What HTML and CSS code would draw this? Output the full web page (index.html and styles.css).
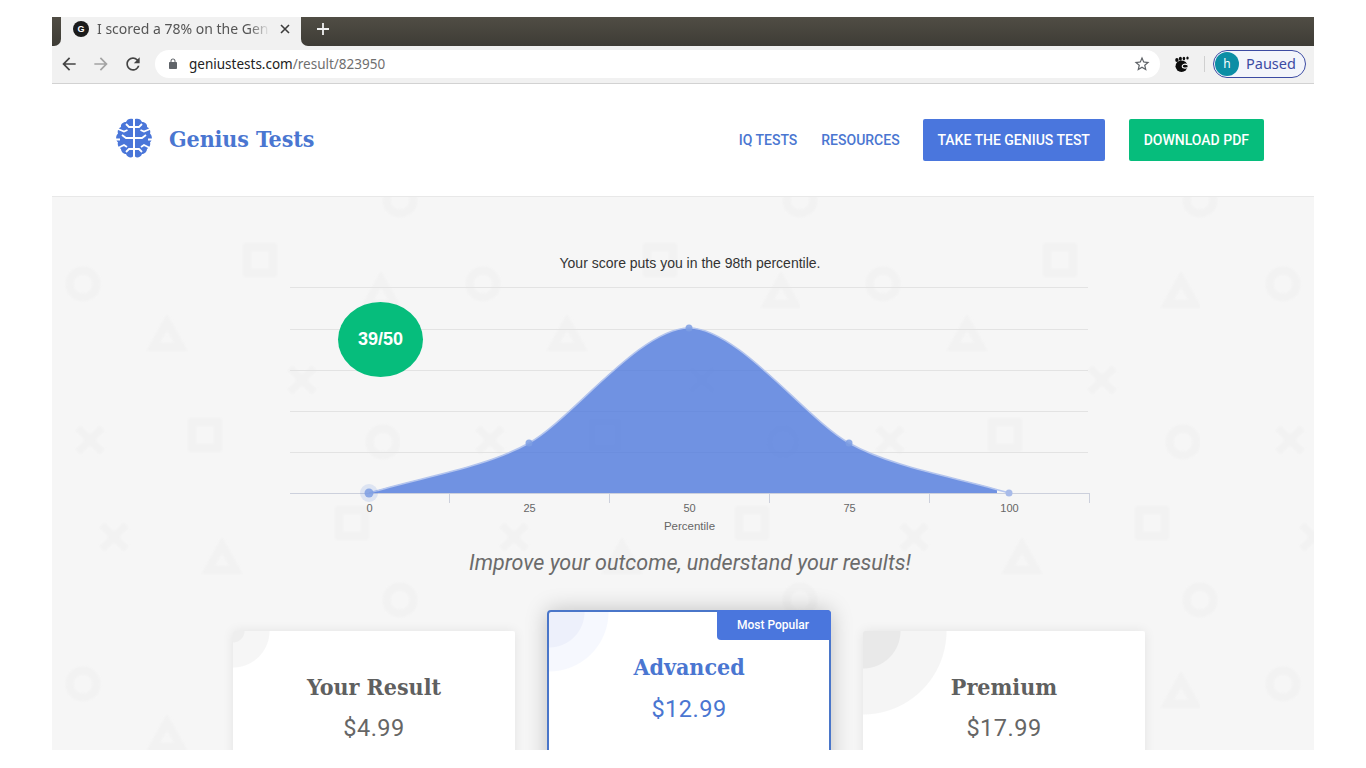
FILE: index.html
```html
<!DOCTYPE html>
<html lang="en">
<head>
    <meta charset="UTF-8">
    <meta name="viewport" content="width=device-width, initial-scale=1.0">
    <title>Genius Tests</title>
    <link rel="stylesheet" href="styles.css">
</head>
<body>
<div class="window">

    <!-- Browser tabs -->
    <div class="tabstrip">
        <div class="tab-stub"></div>
        <div class="tab">
            <span class="favicon">G</span>
            <span class="tab-title">I scored a 78% on the Gen</span>
            <svg class="tab-close" width="10" height="10" viewBox="0 0 10 10"><path d="M1 1l8 8M9 1l-8 8" stroke="#3c3c3c" stroke-width="1.600" fill="none"/></svg>
        </div>
        <div class="tab-rest">
            <svg class="new-tab" width="14" height="14" viewBox="0 0 14 14"><path d="M7 1v12M1 7h12" stroke="#f1f1f1" stroke-width="1.800" fill="none"/></svg>
        </div>
    </div>

    <!-- Browser toolbar -->
    <div class="toolbar">
        <svg class="tool-icon" width="20" height="20" viewBox="0 0 24 24"><path fill="#444" d="M20 11H7.830l5.590-5.590L12 4l-8 8 8 8 1.410-1.410L7.830 13H20v-2z"/></svg>
        <svg class="tool-icon" width="20" height="20" viewBox="0 0 24 24"><path fill="#a3a3a3" d="M4 11h12.170l-5.590-5.590L12 4l8 8-8 8-1.410-1.410L16.170 13H4v-2z"/></svg>
        <svg class="tool-icon" width="20" height="20" viewBox="0 0 24 24"><path fill="#444" d="M17.650 6.350A7.958 7.958 0 0 0 12 4c-4.420 0-7.990 3.580-7.990 8s3.570 8 7.990 8c3.730 0 6.840-2.550 7.730-6h-2.080A5.990 5.990 0 0 1 12 18c-3.310 0-6-2.690-6-6s2.690-6 6-6c1.660 0 3.140.690 4.220 1.780L13 11h7V4l-2.350 2.350z"/></svg>
        <div class="omnibox">
            <svg width="12" height="12" viewBox="0 0 24 24"><path fill="#5f6368" d="M18 8h-1V6c0-2.760-2.240-5-5-5S7 3.240 7 6v2H6c-1.100 0-2 .9-2 2v10c0 1.100.9 2 2 2h12c1.100 0 2-.9 2-2V10c0-1.100-.9-2-2-2zM9 6c0-1.660 1.340-3 3-3s3 1.340 3 3v2H9V6z"/></svg>
            <span class="url"><span class="url-host">geniustests.com</span>/result/823950</span>
            <svg class="star" width="18" height="18" viewBox="0 0 24 24"><path fill="#5f6368" d="M22 9.240l-7.190-.62L12 2 9.190 8.630 2 9.240l5.460 4.730L5.820 21 12 17.270 18.180 21l-1.630-7.030L22 9.240zM12 15.400l-3.760 2.270 1-4.280-3.320-2.880 4.380-.38L12 6.100l1.710 4.040 4.380.38-3.320 2.880 1 4.280L12 15.400z"/></svg>
        </div>
        <svg class="gnome" width="15" height="16" viewBox="0 0 15 16">
            <ellipse cx="6.500" cy="10.200" rx="6" ry="5.800" fill="#0c0c0c"/>
            <path d="M12.500 8.800C9.500 7.400 7 8.600 7.200 10.400 7.400 12.200 10 12.600 12.500 11.600" fill="none" stroke="#fff" stroke-width="1.100"/>
            <ellipse cx="1.900" cy="4" rx="1.700" ry="2.100" fill="#0c0c0c"/>
            <ellipse cx="5.400" cy="2.700" rx="1.500" ry="2" fill="#0c0c0c"/>
            <ellipse cx="8.900" cy="2.600" rx="1.300" ry="1.800" fill="#0c0c0c"/>
            <ellipse cx="12.500" cy="2" rx="1.200" ry="1.600" fill="#0c0c0c"/>
        </svg>
        <span class="tool-sep"></span>
        <div class="profile">
            <span class="avatar">h</span>
            <span class="profile-label">Paused</span>
        </div>
    </div>

    <!-- Site header -->
    <header class="site-header">
        <a class="brand" href="#">
            <svg class="brain" width="36" height="40" viewBox="0 0 36 40">
                <g id="lobe">
                    <path fill="#4a76d9" d="M17 1C14 0 11 1 10 4 7 4 4.500 6 5 9 2.500 10 1 13 2 15.500-.5 18-.5 22 2 24.500 1 27.500 3 30 5 31 5 34 8 36 10 36 11 39 15 40.500 17 38.500Z"/>
                    <path fill="none" stroke="#fff" stroke-width="1.800" d="M17 9H13L10 6M2 11L8 13.500 11.500 12M17 20H10L6 17M-1 21.500H4M2 30L8 27 11 29M17 31H13L10 34"/>
                </g>
                <use href="#lobe" transform="matrix(-1 0 0 1 36 0)"/>
            </svg>
            <span class="brand-name">Genius Tests</span>
        </a>
        <nav class="site-nav">
            <a class="nav-link" href="#">IQ TESTS</a>
            <a class="nav-link nav-link-last" href="#">RESOURCES</a>
            <a class="nav-btn nav-btn-blue" href="#">TAKE THE GENIUS TEST</a>
            <a class="nav-btn nav-btn-green" href="#">DOWNLOAD PDF</a>
        </nav>
    </header>

    <!-- Result -->
    <main class="result">
        <p class="chart-title">Your score puts you in the 98th percentile.</p>

        <div class="chart">
            <div class="score-badge">39/50</div>
            <svg width="800" height="252" viewBox="290 279 800 252">
                <defs>
                    <clipPath id="fill-clip"><rect x="360" y="279" width="637" height="215"/></clipPath>
                </defs>
                <g stroke="#e3e3e3" stroke-width="1">
                    <path d="M290 287.500H1088M290 329.500H1088M290 370.500H1088M290 411.500H1088M290 452.500H1088"/>
                </g>
                <path d="M289.500 493.500H1089.500M289.500 493V503M449.500 493V503M609.500 493V503M769.500 493V503M929.500 493V503M1089.500 493V503" stroke="#ccd0dc" stroke-width="1" fill="none"/>
                <path class="curve-fill" clip-path="url(#fill-clip)" d="M369 493C417 478 485 468 529 443 572 419 640 328 689 328 738 328 806 419 849 443 893 468 961 478 1009 493Z"/>
                <path class="curve-line" d="M369 493C417 478 485 468 529 443 572 419 640 328 689 328 738 328 806 419 849 443 893 468 961 478 1009 493"/>
                <circle cx="369" cy="493" r="9" fill="#4a76dd" fill-opacity=".14"/>
                <circle class="dot" cx="369" cy="493" r="4.500"/>
                <circle class="dot" cx="529" cy="443" r="3.500"/>
                <circle class="dot" cx="689" cy="328" r="3.500"/>
                <circle class="dot" cx="849" cy="443" r="3.500"/>
                <circle class="dot dot-light" cx="1009" cy="493" r="3.500"/>
                <g class="axis-labels" text-anchor="middle">
                    <text x="369.500" y="512">0</text>
                    <text x="529.500" y="512">25</text>
                    <text x="689.500" y="512">50</text>
                    <text x="849.500" y="512">75</text>
                    <text x="1009.500" y="512">100</text>
                    <text class="axis-title" x="689.500" y="530">Percentile</text>
                </g>
            </svg>
        </div>

        <p class="tagline">Improve your outcome, understand your results!</p>

        <div class="plans">
            <div class="plan plan-basic">
                <h3>Your Result</h3>
                <p class="price">$4.99</p>
            </div>
            <div class="plan plan-popular">
                <span class="popular-tag">Most Popular</span>
                <h3>Advanced</h3>
                <p class="price">$12.99</p>
            </div>
            <div class="plan plan-premium">
                <h3>Premium</h3>
                <p class="price">$17.99</p>
            </div>
        </div>
    </main>
</div>
</body>
</html>
```

FILE: styles.css
```css
body {
    margin: 0;
    padding: 17px 52px 18px;
    background-color: #fff;
    height: 768px;
    box-sizing: border-box;
    overflow: hidden;
    font-family: Roboto, sans-serif;
}

.window {
    height: 733px;
    display: flex;
    flex-direction: column;
    overflow: hidden;
}

/* browser tabs */
.tabstrip {
    height: 29px;
    flex: none;
    display: flex;
    background-color: #f1f1f1;
}

.tab-stub,
.tab-rest {
    background: linear-gradient(#504d44, #3e3c36);
}

.tab-stub {
    width: 9px;
    border-bottom-right-radius: 7px;
}

.tab {
    width: 240px;
    display: flex;
    align-items: center;
    padding: 0 0 5px 12px;
    box-sizing: border-box;
    color: #555;
    font-family: "Noto Sans", sans-serif;
    font-size: 14px;
}

.favicon {
    width: 16px;
    height: 16px;
    flex: none;
    border-radius: 50%;
    background-color: #1b1b1b;
    color: #fff;
    font-family: "Liberation Sans", sans-serif;
    font-size: 9px;
    font-weight: bold;
    line-height: 16px;
    text-align: center;
}

.tab-title {
    width: 173px;
    margin: 0 0 2px 8px;
    white-space: nowrap;
    overflow: hidden;
    -webkit-mask-image: linear-gradient(to right, #000 88%, transparent);
    mask-image: linear-gradient(to right, #000 88%, transparent);
}

.tab-close {
    margin-left: 10px;
}

.tab-rest {
    flex: 1;
    display: flex;
    align-items: center;
    padding-bottom: 5px;
    border-bottom-left-radius: 7px;
}

.new-tab {
    margin-left: 15px;
}

/* browser toolbar */
.toolbar {
    height: 36px;
    flex: none;
    display: flex;
    align-items: center;
    padding: 0 0 1px 7px;
    background-color: #f1f1f1;
    border-bottom: 1px solid #d2d2d2;
}

.tool-icon {
    margin-right: 12px;
}

.omnibox {
    width: 1005px;
    height: 28px;
    display: flex;
    align-items: center;
    padding: 0 9px 0 12px;
    box-sizing: border-box;
    background-color: #fff;
    border-radius: 14px;
    font-family: "Noto Sans", sans-serif;
    font-size: 13.5px;
}

.url {
    margin-left: 10px;
    color: #6f6f6f;
    flex: 1;
}

.url-host {
    color: #222;
}

.gnome {
    margin-left: 15px;
}

.tool-sep {
    width: 1px;
    height: 16px;
    margin: 0 8px 0 14px;
    background-color: #d0d0d0;
}

.profile {
    width: 93px;
    height: 28px;
    display: flex;
    align-items: center;
    gap: 7px;
    box-sizing: border-box;
    border: 1px solid #3c4ba3;
    border-radius: 14px;
    padding-left: 1px;
    color: #3c4ba3;
    background-color: #f3f5fb;
    font-family: "Noto Sans", sans-serif;
    font-size: 14.5px;
}

.profile-label {
    margin-bottom: 2px;
}

.avatar {
    width: 24px;
    height: 24px;
    border-radius: 50%;
    background-color: #0b8ea5;
    color: #fff;
    font-size: 12px;
    line-height: 23px;
    text-align: center;
}

/* site header */
.site-header {
    height: 112px;
    flex: none;
    display: flex;
    align-items: center;
    justify-content: space-between;
    padding: 0 50px 0 64px;
    background-color: #fff;
    border-bottom: 1px solid #e8e8e8;
}

.brand {
    display: flex;
    align-items: center;
    gap: 17px;
    margin-bottom: 2px;
    text-decoration: none;
}

.brain {
    margin-bottom: 2px;
}

.brand-name {
    margin-bottom: 2px;
    color: #4a76d1;
    font-family: "DejaVu Serif Condensed", "DejaVu Serif", serif;
    font-size: 23px;
    font-weight: bold;
    letter-spacing: -.1px;
}

.site-nav {
    display: flex;
    align-items: center;
    gap: 24px;
}

.nav-link {
    color: #4a76d1;
    font-size: 14px;
    font-weight: 500;
    text-decoration: none;
}

.nav-link-last {
    margin-right: -1px;
}

.nav-btn {
    height: 42px;
    padding: 0 15px;
    display: flex;
    align-items: center;
    justify-content: center;
    box-sizing: border-box;
    border-radius: 2px;
    color: #fff;
    font-size: 14px;
    font-weight: 500;
    text-decoration: none;
}

.nav-btn-blue {
    width: 182px;
    padding: 0;
    background-color: #4a76dd;
}

.nav-btn-green {
    background-color: #06bd7c;
}

/* result panel */
.result {
    flex: 1;
    min-height: 0;
    overflow: hidden;
    padding: 57px 0 0 14px;
    background-color: #f6f6f6;
    background-position: -52px -197px;
    background-size: 400px 400px;
    background-image: url("data:image/svg+xml,%3Csvg xmlns='http://www.w3.org/2000/svg' width='400' height='400' fill='none' stroke='%23f2f2f2' stroke-width='8'%3E%3Cfilter id='b'%3E%3CfeGaussianBlur stdDeviation='.9'/%3E%3C/filter%3E%3Cg filter='url(%23b)'%3E%3Ccircle cx='83' cy='284' r='13.500'/%3E%3Ccircle cx='0' cy='200' r='13.500'/%3E%3Ccircle cx='400' cy='200' r='13.500'/%3E%3Ccircle cx='383' cy='42' r='13.500'/%3E%3Cpath d='M167 322l14 25h-28zM381 279l14 25h-28zM222 145l14 25h-28z'/%3E%3Cpath d='M247 247h26v26h-26zM192 22h26v26h-26zM339 110h26v26h-26z'/%3E%3Cpath d='M290 368l24 24M314 368l-24 24M78 28l24 24M102 28l-24 24M102 125l24 24M126 125l-24 24'/%3E%3C/g%3E%3C/svg%3E");
}

.chart-title {
    margin: 0 0 7px;
    color: #333;
    font-family: "Liberation Sans", sans-serif;
    font-size: 14px;
    line-height: 18px;
    text-align: center;
}

.chart {
    width: 800px;
    margin: 0 auto;
    position: relative;
}

.chart svg {
    display: block;
}

.score-badge {
    position: absolute;
    left: 48px;
    top: 23px;
    width: 85px;
    height: 75px;
    border-radius: 50%;
    background-color: #06bd7c;
    color: #fff;
    font-family: "Liberation Sans", sans-serif;
    font-size: 18px;
    font-weight: bold;
    line-height: 75px;
    text-align: center;
}

.curve-fill {
    fill: #4a76dd;
    fill-opacity: .78;
}

.curve-line {
    fill: none;
    stroke: #b4c5ee;
    stroke-width: 1.5;
}

.dot {
    fill: #7d9de3;
    fill-opacity: .85;
}

.dot-light {
    fill: #a8bbe9;
    fill-opacity: 1;
}

.axis-labels {
    fill: #666;
    font-family: "Liberation Sans", sans-serif;
    font-size: 11px;
}

.axis-title {
    font-size: 11.5px;
}

.tagline {
    margin: 18px 0 0;
    color: #6b6b6b;
    font-size: 21.5px;
    font-style: italic;
    font-weight: 400;
    line-height: 28px;
    text-align: center;
}

/* pricing cards */
.plans {
    display: flex;
    justify-content: center;
    align-items: flex-start;
    gap: 32px;
    margin: 33px 0 0 -2px;
}

.plan {
    width: 282px;
    height: 300px;
    margin-top: 21px;
    box-sizing: border-box;
    padding-top: 38px;
    border-radius: 2px;
    text-align: center;
    color: #666;
    box-shadow: 0 0 12px rgba(0, 0, 0, .08);
}

.plan h3 {
    margin: 0;
    color: #5f6060;
    font-family: "DejaVu Serif Condensed", "DejaVu Serif", serif;
    font-size: 23px;
    font-weight: bold;
    line-height: 36px;
}

.price {
    margin: 7px 0 0;
    font-size: 23.500px;
    line-height: 32px;
    letter-spacing: .5px;
}

.plan-basic {
    background: radial-gradient(circle at 0 0, #eeeeee 11px, #f6f6f6 12px, #f6f6f6 36px, #fff 37px);
}

.plan-premium {
    background: radial-gradient(circle at 0 0, #e9e9e9 37px, #f5f5f5 38px, #f5f5f5 83px, #fff 84px);
}

.plan-popular {
    width: 284px;
    margin-top: 0;
    padding-top: 37px;
    position: relative;
    border: 2px solid #4a76c9;
    border-radius: 4px;
    background: radial-gradient(circle at 0 0, #edf0fb 35px, #f6f8fe 36px, #f6f8fe 59px, #fff 60px);
    box-shadow: 0 0 22px rgba(0, 0, 0, .22);
}

.plan-popular h3 {
    color: #4a76d1;
}

.plan-popular .price {
    margin-top: 8px;
    color: #4a76d1;
}

.popular-tag {
    position: absolute;
    top: -2px;
    right: -2px;
    width: 114px;
    height: 30px;
    padding-right: 2px;
    box-sizing: border-box;
    background-color: #4a76dd;
    border-radius: 0 4px 0 4px;
    color: #fff;
    font-size: 12px;
    font-weight: 500;
    line-height: 31px;
}
```
